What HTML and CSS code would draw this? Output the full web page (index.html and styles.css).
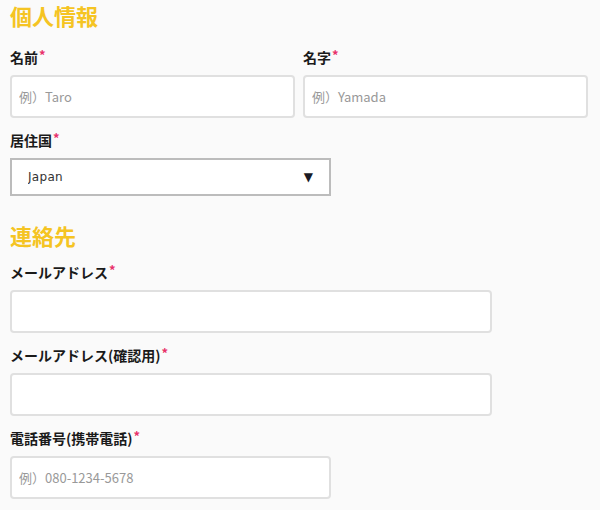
FILE: index.html
```html
<!DOCTYPE html>
<html lang="ja">
<head>
<meta charset="utf-8">
<title>フォーム</title>
<link rel="stylesheet" href="styles.css">
</head>
<body>
<form class="form">
  <section class="section">
    <h2 class="section-title section-title--first">個人情報</h2>
    <div class="row">
      <div class="field">
        <label class="label">名前<span class="req">*</span></label>
        <input class="input" type="text" placeholder="例）Taro">
      </div>
      <div class="field">
        <label class="label">名字<span class="req">*</span></label>
        <input class="input" type="text" placeholder="例）Yamada">
      </div>
    </div>
    <div class="field">
      <label class="label">居住国<span class="req">*</span></label>
      <div class="select w-mid">
        <select class="select-native">
          <option>Japan</option>
        </select>
        <span class="select-arrow">▼</span>
      </div>
    </div>
  </section>
  <section class="section section--next">
    <h2 class="section-title">連絡先</h2>
    <div class="field">
      <label class="label">メールアドレス<span class="req">*</span></label>
      <input class="input w-wide" type="email">
    </div>
    <div class="field">
      <label class="label">メールアドレス(確認用)<span class="req">*</span></label>
      <input class="input w-wide" type="email">
    </div>
    <div class="field">
      <label class="label">電話番号(携帯電話)<span class="req">*</span></label>
      <input class="input w-mid" type="tel" placeholder="例）080-1234-5678">
    </div>
  </section>
</form>
</body>
</html>
```

FILE: styles.css
```css
html, body {
  margin: 0;
  padding: 0;
  background: #fafafa;
  font-family: "Noto Sans CJK JP", "Noto Sans", sans-serif;
  color: #222;
}

.form {
  display: flex;
  flex-direction: column;
  padding: 0 12px 0 10px;
}

.section {
  display: flex;
  flex-direction: column;
  gap: 12px;
}

.section--next {
  margin-top: 24px;
}

.section-title {
  margin: 0;
  font-size: 22px;
  line-height: 30px;
  font-weight: 700;
  color: #f5c423;
}

.section-title--first {
  margin-bottom: 5px;
}

.row {
  display: grid;
  grid-template-columns: 1fr 1fr;
  gap: 8px;
}

.field {
  display: flex;
  flex-direction: column;
  align-items: flex-start;
}

.row .field {
  align-items: stretch;
}

.label {
  font-size: 14px;
  line-height: 20px;
  font-weight: 700;
  color: #1a1a1a;
  margin-bottom: 8px;
}

.req {
  color: #e8326a;
  font-size: 13px;
  font-weight: 700;
  vertical-align: top;
  line-height: 16px;
  margin-left: 1px;
}

.input {
  box-sizing: border-box;
  height: 43px;
  margin: 0;
  padding: 0 7px;
  border: 2px solid #e0e0e0;
  border-radius: 4px;
  background: #fff;
  font-family: "Noto Sans CJK JP", "Noto Sans", sans-serif;
  font-size: 13px;
  color: #333;
  outline: none;
}

.input::placeholder {
  color: #999;
}

.w-wide {
  width: 482px;
}

.w-mid {
  width: 321px;
}

.select {
  box-sizing: border-box;
  height: 38px;
  display: flex;
  align-items: center;
  border: 2px solid #bcbcbc;
  background: #fff;
  padding: 0 16px 0 0;
}

.select-native {
  flex: 1;
  height: 100%;
  border: none;
  background: transparent;
  appearance: none;
  -webkit-appearance: none;
  padding: 0 0 0 16px;
  font-family: "DejaVu Sans", sans-serif;
  font-size: 12px;
  letter-spacing: 0.3px;
  color: #333;
  outline: none;
}

.select-arrow {
  font-family: "DejaVu Sans", sans-serif;
  font-size: 12px;
  line-height: 1;
  color: #1a1a24;
  pointer-events: none;
}
```
